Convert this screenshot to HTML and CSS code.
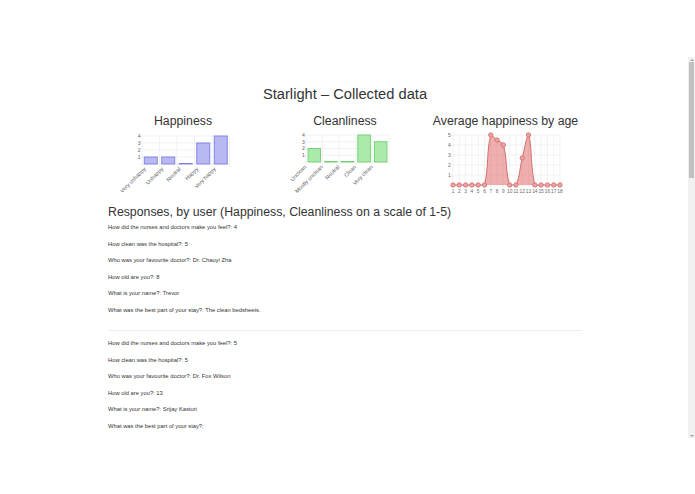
FILE: index.html
```html
<!DOCTYPE html>
<html lang="en">
<head>
<meta charset="utf-8">
<title>Starlight – Collected data</title>
<link rel="stylesheet" href="styles.css">
</head>
<body>
<div class="frame">
  <main class="page">
    <div class="container">
      <h1 class="title">Starlight – Collected data</h1>
      <section class="charts">
        <figure class="chart">
          <h2 class="chart-title chart-title--left">Happiness</h2>
          <svg class="chart-svg" viewBox="0 0 158 68" width="158" height="68">
            <g class="grid">
              <line x1="30" y1="8" x2="121.5" y2="8"/>
              <line x1="30" y1="15" x2="121.5" y2="15"/>
              <line x1="30" y1="22" x2="121.5" y2="22"/>
              <line x1="30" y1="29" x2="121.5" y2="29"/>
              <line x1="30" y1="36" x2="121.5" y2="36"/>
              <line x1="34" y1="8" x2="34" y2="39"/>
              <line x1="51.5" y1="8" x2="51.5" y2="39"/>
              <line x1="69" y1="8" x2="69" y2="39"/>
              <line x1="86.5" y1="8" x2="86.5" y2="39"/>
              <line x1="104" y1="8" x2="104" y2="39"/>
              <line x1="121.5" y1="8" x2="121.5" y2="39"/>
            </g>
            <g class="axis-label">
              <text x="32.5" y="9.8" text-anchor="end">4</text>
              <text x="32.5" y="16.8" text-anchor="end">3</text>
              <text x="32.5" y="23.8" text-anchor="end">2</text>
              <text x="32.5" y="30.8" text-anchor="end">1</text>
            </g>
            <g class="bar bar--blue">
              <rect x="36.25" y="29" width="13" height="7"/>
              <rect x="53.75" y="29" width="13" height="7"/>
              <rect x="71.25" y="35.5" width="13" height="0.5"/>
              <rect x="88.75" y="15" width="13" height="21"/>
              <rect x="106.25" y="8" width="13" height="28"/>
            </g>
            <g class="axis-label axis-label--x">
              <text transform="translate(36.75 40) rotate(-45)" text-anchor="end" dy="0.35em">Very unhappy</text>
              <text transform="translate(54.25 40) rotate(-45)" text-anchor="end" dy="0.35em">Unhappy</text>
              <text transform="translate(71.75 40) rotate(-45)" text-anchor="end" dy="0.35em">Neutral</text>
              <text transform="translate(89.25 40) rotate(-45)" text-anchor="end" dy="0.35em">Happy</text>
              <text transform="translate(106.75 40) rotate(-45)" text-anchor="end" dy="0.35em">Very happy</text>
            </g>
          </svg>
        </figure>
        <figure class="chart">
          <h2 class="chart-title">Cleanliness</h2>
          <svg class="chart-svg" viewBox="0 0 158 68" width="158" height="68">
            <g class="grid">
              <line x1="37" y1="7" x2="123" y2="7"/>
              <line x1="37" y1="13.75" x2="123" y2="13.75"/>
              <line x1="37" y1="20.5" x2="123" y2="20.5"/>
              <line x1="37" y1="27.25" x2="123" y2="27.25"/>
              <line x1="37" y1="34" x2="123" y2="34"/>
              <line x1="40" y1="7" x2="40" y2="37"/>
              <line x1="56.6" y1="7" x2="56.6" y2="37"/>
              <line x1="73.2" y1="7" x2="73.2" y2="37"/>
              <line x1="89.8" y1="7" x2="89.8" y2="37"/>
              <line x1="106.4" y1="7" x2="106.4" y2="37"/>
              <line x1="123" y1="7" x2="123" y2="37"/>
            </g>
            <g class="axis-label">
              <text x="38.8" y="8.8" text-anchor="end">4</text>
              <text x="38.8" y="15.55" text-anchor="end">3</text>
              <text x="38.8" y="22.3" text-anchor="end">2</text>
              <text x="38.8" y="29.05" text-anchor="end">1</text>
            </g>
            <g class="bar bar--green">
              <rect x="42.05" y="20.5" width="12.5" height="13.5"/>
              <rect x="58.65" y="33.5" width="12.5" height="0.5"/>
              <rect x="75.25" y="33.5" width="12.5" height="0.5"/>
              <rect x="91.85" y="7" width="12.5" height="27"/>
              <rect x="108.45" y="13.75" width="12.5" height="20.25"/>
            </g>
            <g class="axis-label axis-label--x">
              <text transform="translate(39.3 38) rotate(-45)" text-anchor="end" dy="0.35em">Unclean</text>
              <text transform="translate(55.9 38) rotate(-45)" text-anchor="end" dy="0.35em">Mostly unclean</text>
              <text transform="translate(72.5 38) rotate(-45)" text-anchor="end" dy="0.35em">Neutral</text>
              <text transform="translate(89.1 38) rotate(-45)" text-anchor="end" dy="0.35em">Clean</text>
              <text transform="translate(105.7 38) rotate(-45)" text-anchor="end" dy="0.35em">Very clean</text>
            </g>
          </svg>
        </figure>
        <figure class="chart">
          <h2 class="chart-title chart-title--right">Average happiness by age</h2>
          <svg class="chart-svg" viewBox="0 0 158 68" width="158" height="68">
            <g class="grid">
              <line x1="27" y1="7" x2="136" y2="7"/>
              <line x1="27" y1="17" x2="136" y2="17"/>
              <line x1="27" y1="27" x2="136" y2="27"/>
              <line x1="27" y1="37" x2="136" y2="37"/>
              <line x1="27" y1="47" x2="136" y2="47"/>
              <line x1="27" y1="57" x2="136" y2="57"/>
              <line x1="29" y1="7" x2="29" y2="59"/>
              <line x1="35.29" y1="7" x2="35.29" y2="59"/>
              <line x1="41.59" y1="7" x2="41.59" y2="59"/>
              <line x1="47.88" y1="7" x2="47.88" y2="59"/>
              <line x1="54.18" y1="7" x2="54.18" y2="59"/>
              <line x1="60.47" y1="7" x2="60.47" y2="59"/>
              <line x1="66.76" y1="7" x2="66.76" y2="59"/>
              <line x1="73.06" y1="7" x2="73.06" y2="59"/>
              <line x1="79.35" y1="7" x2="79.35" y2="59"/>
              <line x1="85.65" y1="7" x2="85.65" y2="59"/>
              <line x1="91.94" y1="7" x2="91.94" y2="59"/>
              <line x1="98.24" y1="7" x2="98.24" y2="59"/>
              <line x1="104.53" y1="7" x2="104.53" y2="59"/>
              <line x1="110.82" y1="7" x2="110.82" y2="59"/>
              <line x1="117.12" y1="7" x2="117.12" y2="59"/>
              <line x1="123.41" y1="7" x2="123.41" y2="59"/>
              <line x1="129.71" y1="7" x2="129.71" y2="59"/>
              <line x1="136" y1="7" x2="136" y2="59"/>
            </g>
            <g class="axis-label">
              <text x="26.8" y="8.8" text-anchor="end">5</text>
              <text x="26.8" y="18.8" text-anchor="end">4</text>
              <text x="26.8" y="28.8" text-anchor="end">3</text>
              <text x="26.8" y="38.8" text-anchor="end">2</text>
              <text x="26.8" y="48.8" text-anchor="end">1</text>
            </g>
            <path class="area" d="M29,57 L60.47,57 C64.94,39.22 62.42,22.53 66.76,7 C67.45,7 70.54,10 73.06,12 C75.58,14 78.52,14.02 79.35,17 C83.55,32.02 81.29,43.15 85.65,57 C86.33,57 91.01,57 91.94,57 C96.04,48.2 95.53,40.75 98.24,30 C100.57,20.75 102.91,7 104.53,7 C107.95,14.33 106.34,39.22 110.82,57 L136,57 Z"/>
            <path class="line" d="M29,57 L60.47,57 C64.94,39.22 62.42,22.53 66.76,7 C67.45,7 70.54,10 73.06,12 C75.58,14 78.52,14.02 79.35,17 C83.55,32.02 81.29,43.15 85.65,57 C86.33,57 91.01,57 91.94,57 C96.04,48.2 95.53,40.75 98.24,30 C100.57,20.75 102.91,7 104.53,7 C107.95,14.33 106.34,39.22 110.82,57 L136,57"/>
            <g class="dot">
              <circle cx="29" cy="57" r="2.2"/>
              <circle cx="35.29" cy="57" r="2.2"/>
              <circle cx="41.59" cy="57" r="2.2"/>
              <circle cx="47.88" cy="57" r="2.2"/>
              <circle cx="54.18" cy="57" r="2.2"/>
              <circle cx="60.47" cy="57" r="2.2"/>
              <circle cx="66.76" cy="7" r="2.2"/>
              <circle cx="73.06" cy="12" r="2.2"/>
              <circle cx="79.35" cy="17" r="2.2"/>
              <circle cx="85.65" cy="57" r="2.2"/>
              <circle cx="91.94" cy="57" r="2.2"/>
              <circle cx="98.24" cy="30" r="2.2"/>
              <circle cx="104.53" cy="7" r="2.2"/>
              <circle cx="110.82" cy="57" r="2.2"/>
              <circle cx="117.12" cy="57" r="2.2"/>
              <circle cx="123.41" cy="57" r="2.2"/>
              <circle cx="129.71" cy="57" r="2.2"/>
              <circle cx="136" cy="57" r="2.2"/>
            </g>
            <g class="axis-label axis-label--small">
              <text x="29" y="64.7" text-anchor="middle">1</text>
              <text x="35.29" y="64.7" text-anchor="middle">2</text>
              <text x="41.59" y="64.7" text-anchor="middle">3</text>
              <text x="47.88" y="64.7" text-anchor="middle">4</text>
              <text x="54.18" y="64.7" text-anchor="middle">5</text>
              <text x="60.47" y="64.7" text-anchor="middle">6</text>
              <text x="66.76" y="64.7" text-anchor="middle">7</text>
              <text x="73.06" y="64.7" text-anchor="middle">8</text>
              <text x="79.35" y="64.7" text-anchor="middle">9</text>
              <text x="85.65" y="64.7" text-anchor="middle">10</text>
              <text x="91.94" y="64.7" text-anchor="middle">11</text>
              <text x="98.24" y="64.7" text-anchor="middle">12</text>
              <text x="104.53" y="64.7" text-anchor="middle">13</text>
              <text x="110.82" y="64.7" text-anchor="middle">14</text>
              <text x="117.12" y="64.7" text-anchor="middle">15</text>
              <text x="123.41" y="64.7" text-anchor="middle">16</text>
              <text x="129.71" y="64.7" text-anchor="middle">17</text>
              <text x="136" y="64.7" text-anchor="middle">18</text>
            </g>
          </svg>
        </figure>
      </section>
      <h3 class="responses-title">Responses, by user (Happiness, Cleanliness on a scale of 1-5)</h3>
      <div class="response">
        <p>How did the nurses and doctors make you feel?: 4</p>
        <p>How clean was the hospital?: 5</p>
        <p>Who was your favourite doctor?: Dr. Chaoyi Zha</p>
        <p>How old are you?: 8</p>
        <p>What is your name?: Trevor</p>
        <p>What was the best part of your stay?: The clean bedsheets.</p>
      </div>
      <hr class="divider">
      <div class="response">
        <p>How did the nurses and doctors make you feel?: 5</p>
        <p>How clean was the hospital?: 5</p>
        <p>Who was your favourite doctor?: Dr. Fox Wilson</p>
        <p>How old are you?: 13</p>
        <p>What is your name?: Srijay Kasturi</p>
        <p>What was the best part of your stay?:</p>
      </div>
    </div>
  </main>
  <div class="scrollbar">
    <span class="sb-btn sb-up"></span>
    <span class="sb-thumb"></span>
    <span class="sb-track"></span>
    <span class="sb-btn sb-down"></span>
  </div>
</div>
</body>
</html>
```
FILE: styles.css
```css
html, body {
  margin: 0;
  padding: 0;
  background: #fff;
}

body {
  font-family: "Liberation Sans", Arial, sans-serif;
  color: #333;
}

.frame {
  display: flex;
  margin-top: 57px;
  height: 381px;
}

.page {
  flex: 1;
  overflow: hidden;
  padding-left: 2px;
}

.container {
  width: 474px;
  margin: 0 auto;
  padding-top: 28px;
}

.title {
  margin: 0;
  font-size: 14.7px;
  line-height: 18px;
  font-weight: normal;
  text-align: center;
}

.charts {
  display: grid;
  grid-template-columns: repeat(3, 158px);
  margin-top: 11px;
}

.chart {
  margin: 0;
}

.chart-title {
  margin: 0;
  font-size: 12.3px;
  line-height: 14px;
  font-weight: normal;
  text-align: center;
  color: #333;
}

.chart-title--left {
  padding-right: 8px;
}

.chart-title--right {
  padding-left: 5px;
}

.chart-svg {
  display: block;
  width: 158px;
  height: 68px;
  overflow: visible;
}

.grid line {
  stroke: #ececec;
  stroke-width: 0.7;
}

.axis-label text {
  font-family: "Liberation Sans", Arial, sans-serif;
  font-size: 5px;
  fill: #666;
}

.axis-label--x text {
  font-size: 5.5px;
}

.axis-label--small text {
  font-size: 4.8px;
}

.bar--blue rect {
  fill: #b8b8f2;
  stroke: #7e7ee0;
  stroke-width: 0.9;
}

.bar--green rect {
  fill: #abeaab;
  stroke: #70cf70;
  stroke-width: 0.9;
}

.area {
  fill: rgba(226, 95, 95, 0.5);
  stroke: none;
}

.line {
  fill: none;
  stroke: #d46c6c;
  stroke-width: 1;
}

.dot circle {
  fill: #eaa4a4;
  stroke: #d46c6c;
  stroke-width: 0.8;
}

.responses-title {
  margin: 9px 0 4px;
  font-size: 12.3px;
  line-height: 14px;
  font-weight: normal;
}

.response p {
  margin: 0 0 8.6px;
  font-size: 5.8px;
  line-height: 8px;
}

.divider {
  margin: 16px 0 8px;
  border: 0;
  border-top: 1px solid #eee;
  height: 0;
}

.scrollbar {
  width: 7px;
  display: flex;
  flex-direction: column;
  background: #f1f1f1;
}

.sb-btn {
  height: 5px;
  display: flex;
  align-items: center;
  justify-content: center;
}

.sb-up::before {
  content: "";
  border-left: 2px solid transparent;
  border-right: 2px solid transparent;
  border-bottom: 2px solid #a3a3a3;
}

.sb-down::before {
  content: "";
  border-left: 2px solid transparent;
  border-right: 2px solid transparent;
  border-top: 2px solid #a3a3a3;
}

.sb-thumb {
  height: 116px;
  margin: 0 1px;
  background: #c1c1c1;
}

.sb-track {
  flex: 1;
}
```
